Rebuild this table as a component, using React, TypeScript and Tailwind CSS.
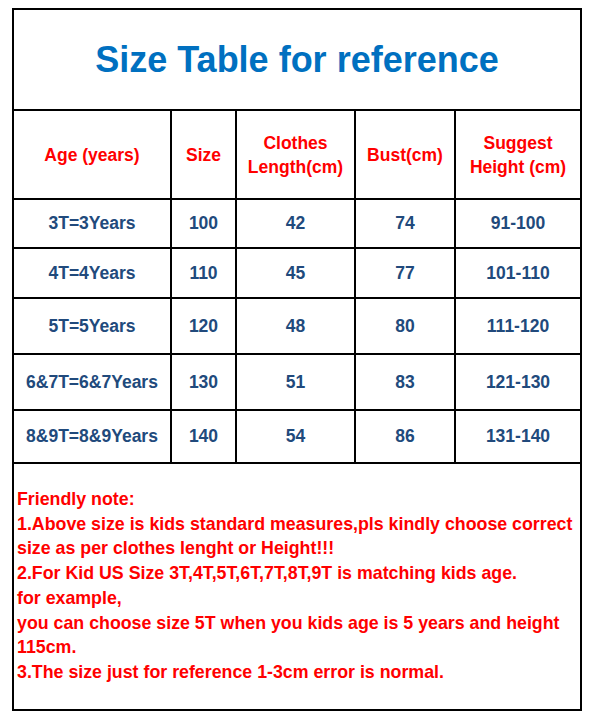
import React from "react";

const headers = [
  ["Age (years)"],
  ["Size"],
  ["Clothes", "Length(cm)"],
  ["Bust(cm)"],
  ["Suggest", "Height (cm)"],
];

const rows = [
  { h: "h-[47px]", cells: ["3T=3Years", "100", "42", "74", "91-100"] },
  { h: "h-[48px]", cells: ["4T=4Years", "110", "45", "77", "101-110"] },
  { h: "h-[54px]", cells: ["5T=5Years", "120", "48", "80", "111-120"] },
  { h: "h-[54px]", cells: ["6&7T=6&7Years", "130", "51", "83", "121-130"] },
  { h: "h-[51px]", cells: ["8&9T=8&9Years", "140", "54", "86", "131-140"] },
];

const notes = [
  "Friendly note:",
  "1.Above size is kids standard measures,pls kindly choose correct",
  "size as per clothes lenght or Height!!!",
  "2.For Kid US Size 3T,4T,5T,6T,7T,8T,9T is matching kids age.",
  "for example,",
  "you can choose size 5T when you kids age is 5 years and height",
  "115cm.",
  "3.The size just for reference 1-3cm error is normal.",
];

export default function App() {
  return (
    <div className="min-h-[727px] w-[606px] bg-white pt-[8px] pl-[12px] font-['Liberation_Sans',Arial,sans-serif] font-bold">
      <div className="w-[570px] border-2 border-black">
        {/* Title */}
        <div className="flex h-[101px] items-center justify-center border-b-2 border-black text-[36px] text-[#0070c0]">
          Size Table for reference
        </div>

        {/* Table */}
        <div className="grid grid-cols-[156px_63px_117px_98px_124px] gap-[2px] border-b-2 border-black bg-black">
          {headers.map((lines, i) => (
            <div
              key={i}
              className="flex h-[87px] flex-col items-center justify-center bg-white text-center text-[17.5px] leading-[24px] text-[#ff0000]"
            >
              {lines.map((l) => (
                <span key={l}>{l}</span>
              ))}
            </div>
          ))}
          {rows.map((row) =>
            row.cells.map((c, j) => (
              <div
                key={row.cells[0] + j}
                className={`${row.h} flex items-center justify-center bg-white text-[17.5px] text-[#214a7c]`}
              >
                {c}
              </div>
            ))
          )}
        </div>

        {/* Notes */}
        <div className="h-[245px] pt-[23px] pl-[3px] text-[17.8px] leading-[24.7px] text-[#ff0000]">
          {notes.map((n) => (
            <div key={n} className="whitespace-nowrap">
              {n}
            </div>
          ))}
        </div>
      </div>
    </div>
  );
}
